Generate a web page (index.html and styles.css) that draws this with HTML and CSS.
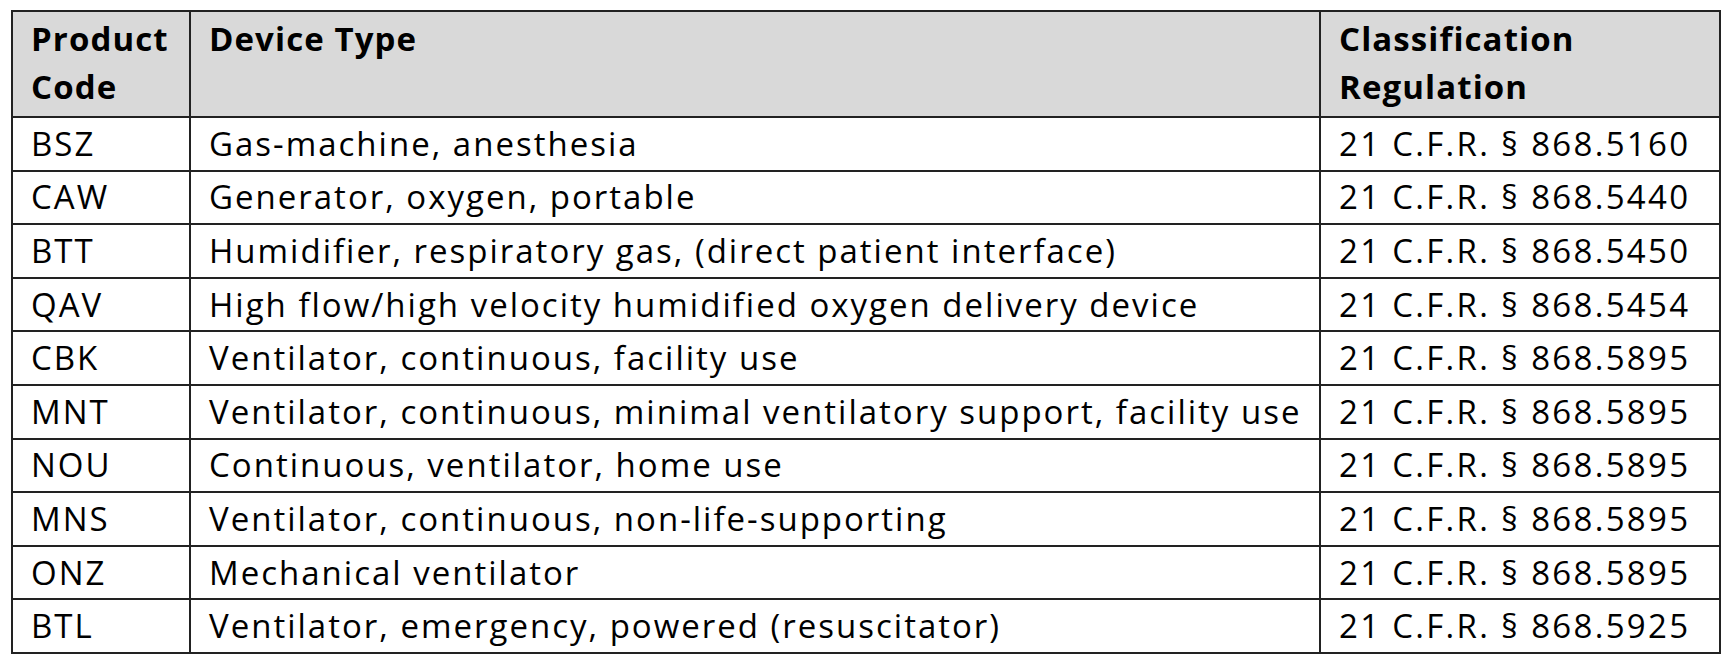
FILE: index.html
```html
<!DOCTYPE html>
<html>
<head>
<meta charset="utf-8">
<link rel="stylesheet" href="styles.css">
</head>
<body>
<table class="codes">
  <colgroup>
    <col class="c-code">
    <col class="c-type">
    <col class="c-reg">
  </colgroup>
  <thead>
    <tr class="head">
      <th>Product<br>Code</th>
      <th>Device Type</th>
      <th>Classification<br>Regulation</th>
    </tr>
  </thead>
  <tbody>
    <tr><td>BSZ</td><td>Gas-machine, anesthesia</td><td class="reg">21 C.F.R. § 868.5160</td></tr>
    <tr><td>CAW</td><td>Generator, oxygen, portable</td><td class="reg">21 C.F.R. § 868.5440</td></tr>
    <tr><td>BTT</td><td>Humidifier, respiratory gas, (direct patient interface)</td><td class="reg">21 C.F.R. § 868.5450</td></tr>
    <tr><td>QAV</td><td>High flow/high velocity humidified oxygen delivery device</td><td class="reg">21 C.F.R. § 868.5454</td></tr>
    <tr><td>CBK</td><td>Ventilator, continuous, facility use</td><td class="reg">21 C.F.R. § 868.5895</td></tr>
    <tr><td>MNT</td><td>Ventilator, continuous, minimal ventilatory support, facility use</td><td class="reg">21 C.F.R. § 868.5895</td></tr>
    <tr><td>NOU</td><td>Continuous, ventilator, home use</td><td class="reg">21 C.F.R. § 868.5895</td></tr>
    <tr><td>MNS</td><td>Ventilator, continuous, non-life-supporting</td><td class="reg">21 C.F.R. § 868.5895</td></tr>
    <tr><td>ONZ</td><td>Mechanical ventilator</td><td class="reg">21 C.F.R. § 868.5895</td></tr>
    <tr><td>BTL</td><td>Ventilator, emergency, powered (resuscitator)</td><td class="reg">21 C.F.R. § 868.5925</td></tr>
  </tbody>
</table>
</body>
</html>
```
FILE: styles.css
```css
html, body {
  margin: 0;
  padding: 0;
  background: #ffffff;
}
body {
  padding: 10px 0 0 11px;
  font-family: "Open Sans", "Liberation Sans", sans-serif;
  color: #000;
}
.codes {
  border-collapse: collapse;
  table-layout: fixed;
  width: 1708px;
  font-size: 33px;
}
.c-code { width: 178px; }
.c-type { width: 1130px; }
.c-reg { width: 400px; }
.codes th,
.codes td {
  border: 2px solid #222;
  padding: 0 0 0 18px;
  text-align: left;
  vertical-align: middle;
  white-space: nowrap;
}
.codes th {
  background: #d9d9d9;
  font-weight: 700;
  letter-spacing: 1.1px;
  line-height: 48px;
  vertical-align: top;
  padding-top: 3px;
}
.head { height: 106px; }
.codes tbody tr { height: 53.6px; }
.codes td {
  line-height: 40px;
  letter-spacing: 2px;
}
.codes td.reg { letter-spacing: 2.3px; }
```
